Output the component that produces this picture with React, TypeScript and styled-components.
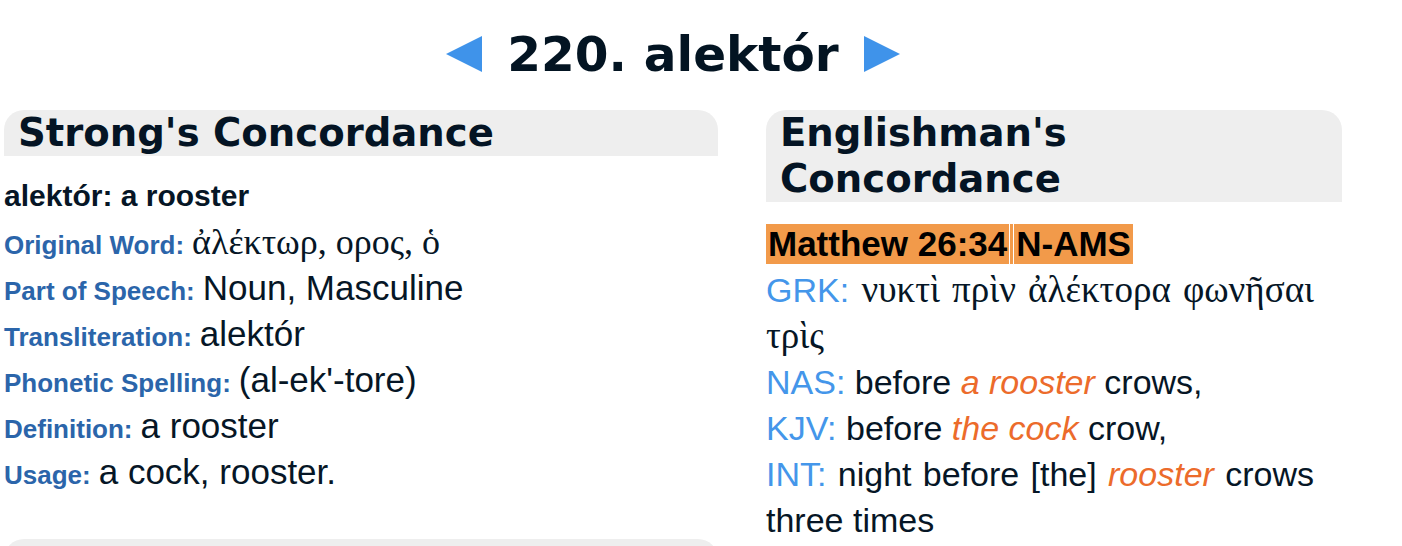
import React from "react";
import styled, { createGlobalStyle } from "styled-components";

const GlobalStyle = createGlobalStyle`
  html, body {
    margin: 0;
    padding: 0;
    background: #ffffff;
  }
  body {
    font-family: "Liberation Sans", Arial, sans-serif;
    color: #061626;
  }
`;

const Page = styled.div`
  width: 1338px;
  padding-left: 4px;
`;

const Title = styled.h1`
  display: flex;
  justify-content: center;
  align-items: center;
  gap: 25px;
  margin: 26px 0 28px;
  font-family: "DejaVu Sans", Verdana, sans-serif;
  font-weight: bold;
  font-size: 48.5px;
  line-height: 56px;
  color: #031422;
`;

const Arrow = styled.svg`
  width: 36px;
  height: 36px;
  display: block;
  flex: none;
`;

const Columns = styled.div`
  display: flex;
  align-items: flex-start;
  gap: 48px;
`;

const Column = styled.div<{ $w: number }>`
  width: ${(p) => p.$w}px;
  flex: none;
`;

const SectionHeader = styled.h2`
  margin: 0;
  background: #eeeeee;
  border-radius: 20px 20px 0 0;
  padding: 0 14px;
  font-family: "DejaVu Sans", Verdana, sans-serif;
  font-weight: bold;
  font-size: 38.6px;
  line-height: 46px;
  color: #041424;
`;

const NextHeader = styled.div`
  margin-top: 44px;
  height: 46px;
  background: #eeeeee;
  border-radius: 20px 20px 0 0;
`;

const LeftBody = styled.div`
  padding-top: 17px;
`;

const Headword = styled.div`
  font-weight: bold;
  font-size: 30px;
  line-height: 46px;
  color: #061626;
`;

const Row = styled.div`
  display: flex;
  align-items: baseline;
  gap: 8px;
  height: 46px;
  white-space: nowrap;
`;

const Label = styled.span`
  font-weight: bold;
  font-size: 26px;
  line-height: 46px;
  color: #2b65aa;
`;

const Value = styled.span`
  font-size: 35px;
  line-height: 46px;
  color: #061626;
`;

const GreekValue = styled.span`
  font-family: "Liberation Serif", "DejaVu Serif", serif;
  font-size: 36px;
  line-height: 46px;
  color: #061626;
`;

const RightBody = styled.div`
  padding-top: 19px;
  width: 548px;
`;

const RefRow = styled.div`
  display: inline-flex;
  gap: 3px;
  background: #f29a4a;
  margin: 3px 0;
`;

const RefCell = styled.span<{ $side: "left" | "right" }>`
  font-weight: bold;
  font-size: 35px;
  line-height: 40px;
  color: #000000;
  padding: 0 2px;
  ${(p) =>
    p.$side === "left"
      ? "border-right: 1px solid #ffffff;"
      : "border-left: 1px solid #ffffff;"}
`;

const Verse = styled.div`
  font-size: 34px;
  line-height: 46px;
  text-align: justify;
  color: #061626;
`;

const VersionLabel = styled.span`
  color: #4496ea;
`;

const GreekText = styled.span`
  font-family: "Liberation Serif", "DejaVu Serif", serif;
  font-size: 37px;
  line-height: 46px;
`;

const Highlight = styled.em`
  color: #ec6b2b;
  font-style: italic;
`;

const LeftArrow = () => (
  <Arrow viewBox="0 0 36 36">
    <polygon points="0,18 36,0 36,36" fill="#3f93ea" />
  </Arrow>
);

const RightArrow = () => (
  <Arrow viewBox="0 0 36 36">
    <polygon points="36,18 0,0 0,36" fill="#3f93ea" />
  </Arrow>
);

const rows: { label: string; value: string; greek?: boolean }[] = [
  { label: "Original Word:", value: "ἀλέκτωρ, ορος, ὁ", greek: true },
  { label: "Part of Speech:", value: "Noun, Masculine" },
  { label: "Transliteration:", value: "alektór" },
  { label: "Phonetic Spelling:", value: "(al-ek'-tore)" },
  { label: "Definition:", value: "a rooster" },
  { label: "Usage:", value: "a cock, rooster." },
];

export default function App() {
  return (
    <>
      <GlobalStyle />
      <Page>
        <Title>
          <LeftArrow />
          <span>220. alektór</span>
          <RightArrow />
        </Title>
        <Columns>
          <Column $w={714}>
            <SectionHeader>Strong's Concordance</SectionHeader>
            <LeftBody>
              <Headword>alektór: a rooster</Headword>
              {rows.map((r) => (
                <Row key={r.label}>
                  <Label>{r.label}</Label>
                  {r.greek ? (
                    <GreekValue>{r.value}</GreekValue>
                  ) : (
                    <Value>{r.value}</Value>
                  )}
                </Row>
              ))}
            </LeftBody>
            <NextHeader />
          </Column>
          <Column $w={576}>
            <SectionHeader>Englishman's Concordance</SectionHeader>
            <RightBody>
              <RefRow>
                <RefCell $side="left">Matthew 26:34</RefCell>
                <RefCell $side="right">N-AMS</RefCell>
              </RefRow>
              <Verse>
                <VersionLabel>GRK:</VersionLabel>{" "}
                <GreekText>νυκτὶ πρὶν ἀλέκτορα φωνῆσαι τρὶς</GreekText>
              </Verse>
              <Verse>
                <VersionLabel>NAS:</VersionLabel> before{" "}
                <Highlight>a rooster</Highlight> crows,
              </Verse>
              <Verse>
                <VersionLabel>KJV:</VersionLabel> before{" "}
                <Highlight>the cock</Highlight> crow,
              </Verse>
              <Verse>
                <VersionLabel>INT:</VersionLabel> night before [the]{" "}
                <Highlight>rooster</Highlight> crows three times
              </Verse>
            </RightBody>
          </Column>
        </Columns>
      </Page>
    </>
  );
}
